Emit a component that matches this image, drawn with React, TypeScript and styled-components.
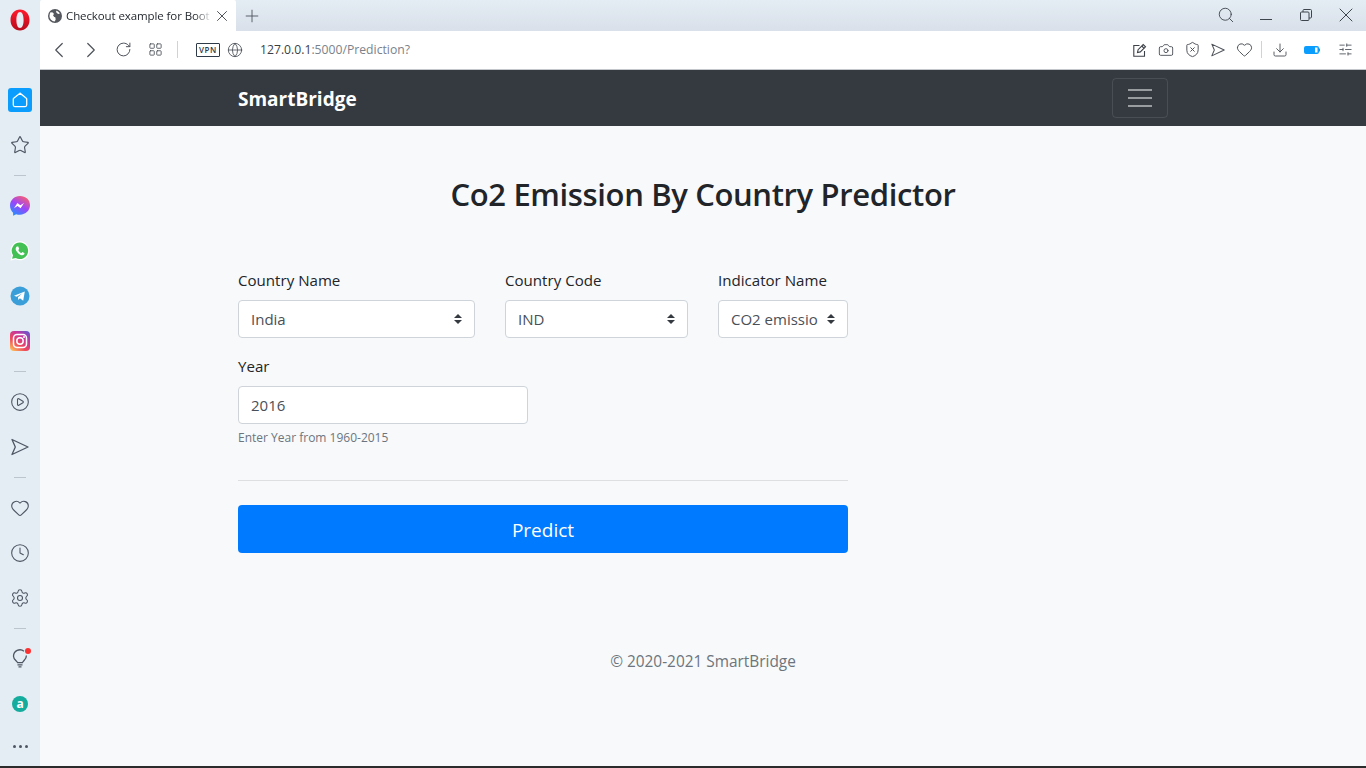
import React from "react";
import styled, { createGlobalStyle } from "styled-components";
import {
  ChevronLeft,
  ChevronRight,
  Clock,
  Download,
  Globe,
  Heart,
  LayoutGrid,
  Plus,
  RotateCw,
  Search,
  Settings,
  SlidersHorizontal,
  Star,
  X,
  Camera,
  ShieldX,
  CirclePlay,
} from "lucide-react";

const GlobalStyle = createGlobalStyle`
  html, body {
    margin: 0;
    padding: 0;
    height: 100%;
    overflow: hidden;
    background: #e4ecf4;
  }
  * { box-sizing: border-box; }
  body {
    font-family: "Open Sans", "Noto Sans", "Liberation Sans", sans-serif;
  }
`;

const Screen = styled.div`
  display: flex;
  width: 1366px;
  height: 768px;
  border-bottom: 2px solid #2b2b2b;
`;

const SideBar = styled.aside`
  width: 40px;
  flex: none;
  display: flex;
  flex-direction: column;
  align-items: center;
  gap: 15px;
  background: #e4ecf4;
  color: #4e5663;
`;

const LogoSlot = styled.div`
  height: 40px;
  margin-bottom: 30px;
  display: flex;
  align-items: center;
  justify-content: center;
`;

const SideItem = styled.div`
  position: relative;
  width: 30px;
  height: 30px;
  flex: none;
  display: flex;
  align-items: center;
  justify-content: center;
`;

const HomeTile = styled.div`
  width: 24px;
  height: 24px;
  border-radius: 3px;
  background: #0a9dfd;
  color: #fff;
  display: flex;
  align-items: center;
  justify-content: center;
`;

const SideRule = styled.div`
  width: 12px;
  height: 1px;
  flex: none;
  background: #bcc4ce;
`;

const Dot = styled.span`
  position: absolute;
  top: 4px;
  right: 4px;
  width: 6px;
  height: 6px;
  border-radius: 50%;
  background: #fb3131;
`;

const Dots = styled.div`
  display: flex;
  gap: 3px;
  margin-top: 11px;
  span {
    width: 3px;
    height: 3px;
    border-radius: 50%;
    background: #4e5663;
  }
`;

const Main = styled.div`
  flex: 1;
  min-width: 0;
  display: flex;
  flex-direction: column;
`;

const TabStrip = styled.div`
  height: 31px;
  flex: none;
  display: flex;
  align-items: stretch;
  background: linear-gradient(#e4ecf4, #d9e0e9);
  color: #4a4f57;
`;

const Tab = styled.div`
  position: relative;
  width: 196px;
  display: flex;
  align-items: center;
  padding-left: 8px;
  background: #fff;
  border-radius: 2px 2px 0 0;
`;

const TabTitle = styled.span`
  width: 146px;
  margin-left: 4px;
  font-size: 11.5px;
  letter-spacing: -0.1px;
  color: #24292f;
  white-space: nowrap;
  -webkit-mask-image: linear-gradient(90deg, #000 88%, transparent);
  mask-image: linear-gradient(90deg, #000 88%, transparent);
`;

const TabClose = styled.span`
  margin-left: 1px;
  display: flex;
  color: #3c4148;
`;

const NewTab = styled.span`
  margin-left: 6px;
  display: flex;
  align-items: center;
  color: #50565e;
`;

const WindowButtons = styled.div`
  margin-left: auto;
  display: flex;
  align-items: center;
  padding-bottom: 1px;
  color: #3f454d;
`;

const WindowButton = styled.span`
  width: 40px;
  display: flex;
  justify-content: center;
`;

const ToolBar = styled.div`
  height: 39px;
  flex: none;
  display: flex;
  align-items: center;
  padding: 0 7px 1px 3px;
  background: #fff;
  border-bottom: 1px solid #c3c7cb;
  color: #4d5259;
`;

const ToolButton = styled.span<{ $w: number }>`
  width: ${(p) => p.$w}px;
  flex: none;
  display: flex;
  justify-content: center;
`;

const ToolRule = styled.span<{ $left: number; $right: number }>`
  width: 1px;
  height: 17px;
  margin: 0 ${(p) => p.$right}px 0 ${(p) => p.$left}px;
  background: #cfd3d7;
`;

const VpnBadge = styled.span`
  width: 24px;
  height: 14px;
  margin-right: 7px;
  border: 1px solid #2f3a48;
  border-radius: 1px;
  font-size: 8px;
  font-weight: 600;
  letter-spacing: 0.6px;
  line-height: 12px;
  text-align: center;
  color: #2f3a48;
`;

const Address = styled.span`
  margin-left: 17px;
  font-size: 12.2px;
  color: #7a828c;
`;

const Host = styled.span`
  color: #3a3f46;
`;

const ToolEnd = styled.div`
  margin-left: auto;
  display: flex;
  align-items: center;
`;

const Page = styled.div`
  flex: 1;
  display: flex;
  flex-direction: column;
  background: #f8f9fa;
  color: #212529;
`;

const NavBar = styled.nav`
  height: 56px;
  flex: none;
  display: flex;
  align-items: center;
  justify-content: space-between;
  padding: 0 198px;
  background: #343a40;
`;

const Brand = styled.a`
  padding-top: 1px;
  font-size: 19px;
  font-weight: 700;
  color: #fff;
`;

const Toggler = styled.button`
  width: 56px;
  height: 40px;
  padding: 0;
  display: flex;
  flex-direction: column;
  align-items: center;
  justify-content: center;
  gap: 6px;
  border: 1px solid rgba(255, 255, 255, 0.1);
  border-radius: 4px;
  background: transparent;
  span {
    width: 24px;
    height: 2px;
    background: rgba(255, 255, 255, 0.5);
  }
`;

const Content = styled.main`
  padding: 46px 198px 0;
`;

const Title = styled.h2`
  margin: 0 0 52px;
  font-size: 31px;
  font-weight: 600;
  letter-spacing: -0.36px;
  line-height: 44px;
  text-align: center;
`;

const Form = styled.form`
  width: 610px;
`;

const FieldRow = styled.div`
  display: grid;
  grid-template-columns: 237px 183px 130px;
  column-gap: 30px;
  margin-bottom: 16px;
`;

const Field = styled.div<{ $width?: number }>`
  width: ${(p) => (p.$width ? `${p.$width}px` : "auto")};
  min-width: 0;
`;

const Label = styled.label`
  display: block;
  height: 24px;
  margin-bottom: 8px;
  font-size: 15.1px;
  line-height: 24px;
`;

const SelectWrap = styled.div`
  position: relative;
  svg {
    position: absolute;
    top: 14px;
    right: 13px;
  }
`;

const Select = styled.select`
  display: block;
  width: 100%;
  height: 38px;
  padding: 0 24px 0 12px;
  border: 1px solid #ced4da;
  border-radius: 4px;
  background: #fff;
  appearance: none;
  font: inherit;
  font-size: 15px;
  color: #495057;
`;

const Input = styled.input`
  display: block;
  width: 100%;
  height: 38px;
  padding: 0 12px;
  border: 1px solid #ced4da;
  border-radius: 4px;
  background: #fff;
  font: inherit;
  font-size: 15px;
  color: #495057;
`;

const Hint = styled.small`
  display: block;
  margin-top: 5px;
  font-size: 12px;
  line-height: 18px;
  color: #6c757d;
`;

const Rule = styled.hr`
  margin: 33px 0 24px;
  border: 0;
  border-top: 1px solid rgba(0, 0, 0, 0.1);
`;

const PredictButton = styled.button`
  display: block;
  width: 100%;
  height: 48px;
  padding: 2px 0 0;
  border: 0;
  border-radius: 4px;
  background: #007bff;
  font: inherit;
  font-size: 19px;
  color: #fff;
`;

const Footer = styled.p`
  margin: 97px 0 0;
  font-size: 15.4px;
  line-height: 24px;
  text-align: center;
  color: #6c757d;
`;

const OperaLogo = () => (
  <svg width="20" height="22" viewBox="0 0 20 22">
    <defs>
      <linearGradient id="opera" x1="0" y1="0" x2="0" y2="1">
        <stop offset="0" stopColor="#ff1b2d" />
        <stop offset="1" stopColor="#b80a1c" />
      </linearGradient>
    </defs>
    <path
      fillRule="evenodd"
      fill="url(#opera)"
      d="M10 0.500C4.600 0.500 .5 5.100 .5 11s4.100 10.500 9.500 10.500 9.500-4.600 9.500-10.500S15.400 .5 10 .5zm0 2.500c2.300 0 3.600 3.500 3.600 8s-1.300 8-3.600 8-3.600-3.500-3.600-8S7.700 3 10 3z"
    />
  </svg>
);

const HomeOutline = () => (
  <svg width="16" height="16" viewBox="0 0 16 16" fill="none" stroke="currentColor" strokeWidth="1.3">
    <path d="M8 1.200L1.700 6.300c-.3.200-.4.500-.4.800v6c0 .9.600 1.500 1.500 1.500h10.400c.9 0 1.500-.6 1.500-1.500v-6c0-.3-.1-.6-.4-.8z" />
  </svg>
);

const Plane = ({ size }: { size: number }) => (
  <svg width={size} height={size} viewBox="0 0 18 18" fill="none" stroke="currentColor" strokeWidth="1.300" strokeLinejoin="round">
    <path d="M1 1.500L17 9 1 16.500 4.300 9z" />
  </svg>
);

const PenBox = () => (
  <svg width="14" height="14" viewBox="0 0 14 14" fill="none" stroke="#3c4148" strokeWidth="1.100">
    <path d="M6.500 2.500H.8v10.700h10.700V8" />
    <path d="M4.500 9.500l.6-2.800L10.200 1.500l2.300 2.300-5.200 5.100z" />
    <path d="M8.800 3l2.300 2.300" />
  </svg>
);

const MinimizeLine = () => (
  <svg width="12" height="12" viewBox="0 0 12 12">
    <path d="M0 10.500h12" stroke="currentColor" strokeWidth="1" />
  </svg>
);

const RestoreBoxes = () => (
  <svg width="12" height="12" viewBox="0 0 12 12" fill="none" stroke="currentColor" strokeWidth="1">
    <rect x=".5" y="3" width="8.500" height="8.500" rx="1" />
    <path d="M3 3V1.500c0-.6.400-1 1-1h6.500c.6 0 1 .4 1 1V8c0 .6-.4 1-1 1H9" />
  </svg>
);

const BatteryBar = () => (
  <svg width="16" height="8" viewBox="0 0 16 8">
    <rect width="15" height="8" rx="2" fill="#0a9dfd" />
    <rect x="11" y="1.500" width="2.500" height="5" fill="#fff" />
    <rect x="15" y="2.500" width="1" height="3" fill="#0a9dfd" />
  </svg>
);

const Bulb = () => (
  <svg width="16" height="20" viewBox="0 0 16 20" fill="none" stroke="currentColor" strokeWidth="1.300">
    <path d="M5.300 13.500c0-1.500-3.800-2.800-3.800-6.300a6.500 6.500 0 0 1 10.500-5" />
    <path d="M14.400 6.500c.3 3.800-3.700 5.300-3.700 7" />
    <path d="M5 13.700h6M5.500 15.800h5M6.500 17.900h3" />
  </svg>
);

const Messenger = () => (
  <svg width="20" height="20" viewBox="0 0 20 20">
    <defs>
      <linearGradient id="msg" x1="0.2" y1="1" x2="0.8" y2="0">
        <stop offset="0" stopColor="#1f93ff" />
        <stop offset="0.5" stopColor="#9a45fb" />
        <stop offset="1" stopColor="#ff6068" />
      </linearGradient>
    </defs>
    <path
      fill="url(#msg)"
      d="M10 0C4.400 0 0 4.100 0 9.600c0 2.900 1.200 5.400 3.100 7.100v3.100l3-1.600c1.200.4 2.500.5 3.900.5 5.600 0 10-4.100 10-9.600S15.600 0 10 0z"
    />
    <path fill="#fff" d="M4 12.300l3.400-5.300 3 2.300 3.600-2.300-3.400 5.300-3-2.300z" />
  </svg>
);

const WhatsApp = () => (
  <svg width="20" height="20" viewBox="0 0 20 20">
    <path
      fill="#fff"
      d="M10 .3A9.500 9.500 0 0 0 1.800 14.600L.4 19.700l5.300-1.400A9.500 9.500 0 1 0 10 .3z"
    />
    <path
      fill="#43c155"
      d="M10 1.600a8.200 8.200 0 0 0-7 12.600l-.9 3.600 3.700-.9A8.200 8.200 0 1 0 10 1.600z"
    />
    <path
      fill="#fff"
      d="M7.300 5.500c-.3 0-.6.100-.9.400-.9 1-1 2.400-.2 3.900 1 1.900 2.500 3.300 4.500 4.200 1.300.5 2.500.4 3.300-.4.400-.4.500-.9.500-1.400l-2-1.100-1 1c-1.300-.4-2.700-1.800-3.200-3.200l.9-1-.9-2.300z"
    />
  </svg>
);

const Telegram = () => (
  <svg width="20" height="20" viewBox="0 0 20 20">
    <circle cx="10" cy="10" r="9.500" fill="#3a9fd8" />
    <path fill="#fff" d="M4 9.800l10.800-4.300-1.600 9.200-3.300-2.400-1.500 1.600-.5-2.700 4.500-4-5.700 3.500z" />
  </svg>
);

const Instagram = () => (
  <svg width="20" height="20" viewBox="0 0 20 20">
    <defs>
      <linearGradient id="ig" x1="0.1" y1="1" x2="0.9" y2="0">
        <stop offset="0" stopColor="#fdc35a" />
        <stop offset="0.35" stopColor="#ef4a5c" />
        <stop offset="0.7" stopColor="#c4379f" />
        <stop offset="1" stopColor="#5f5bd0" />
      </linearGradient>
    </defs>
    <rect width="20" height="20" rx="4" fill="url(#ig)" />
    <rect x="3.500" y="3.500" width="13" height="13" rx="3.500" fill="none" stroke="#fff" strokeWidth="1.500" />
    <circle cx="10" cy="10" r="3.200" fill="none" stroke="#fff" strokeWidth="1.500" />
    <circle cx="14" cy="6" r="1" fill="#fff" />
  </svg>
);

const AliExtension = () => (
  <svg width="16" height="16" viewBox="0 0 16 16">
    <circle cx="8" cy="8" r="8" fill="#14ac9c" />
    <text x="8" y="12" textAnchor="middle" fontSize="12" fontWeight="700" fill="#fff" fontFamily="Open Sans">
      a
    </text>
  </svg>
);

const TabGlobe = () => (
  <svg width="14" height="14" viewBox="0 0 14 14">
    <path
      fill="#55595f"
      d="M7 0a7 7 0 1 0 0 14A7 7 0 0 0 7 0zM2.500 3.200l2.300 0.300 1.200 1.500-1 1.300 1.200 1.700 1.100 0.300 0.400 2.200-1 2.100C3.800 12.100 1.500 9.800 1.500 7c0-1.400.4-2.800 1-3.800zM8 1.700c1.700.3 3.100 1.300 3.900 2.700L10.200 5 8.500 3.800z"
    />
  </svg>
);

const Carets = () => (
  <svg width="8" height="10" viewBox="0 0 8 10">
    <path fill="#343a40" d="M4 0L0 4h8zM4 10L0 6h8z" />
  </svg>
);

const App: React.FC = () => {
  return (
    <>
      <GlobalStyle />
      <Screen>
        <SideBar>
          <LogoSlot>
            <OperaLogo />
          </LogoSlot>
          <SideItem>
            <HomeTile>
              <HomeOutline />
            </HomeTile>
          </SideItem>
          <SideItem>
            <Star size={20} strokeWidth={1.4} />
          </SideItem>
          <SideRule />
          <SideItem>
            <Messenger />
          </SideItem>
          <SideItem>
            <WhatsApp />
          </SideItem>
          <SideItem>
            <Telegram />
          </SideItem>
          <SideItem>
            <Instagram />
          </SideItem>
          <SideRule />
          <SideItem>
            <CirclePlay size={20} strokeWidth={1.3} />
          </SideItem>
          <SideItem>
            <Plane size={18} />
          </SideItem>
          <SideRule />
          <SideItem>
            <Heart size={20} strokeWidth={1.3} />
          </SideItem>
          <SideItem>
            <Clock size={20} strokeWidth={1.3} />
          </SideItem>
          <SideItem>
            <Settings size={20} strokeWidth={1.3} />
          </SideItem>
          <SideRule />
          <SideItem>
            <Bulb />
            <Dot />
          </SideItem>
          <SideItem>
            <AliExtension />
          </SideItem>
          <Dots>
            <span />
            <span />
            <span />
          </Dots>
        </SideBar>
        <Main>
          <TabStrip>
            <Tab>
              <TabGlobe />
              <TabTitle>Checkout example for Boot</TabTitle>
              <TabClose>
                <X size={18} strokeWidth={1.2} />
              </TabClose>
            </Tab>
            <NewTab>
              <Plus size={20} strokeWidth={1.1} />
            </NewTab>
            <WindowButtons>
              <WindowButton>
                <Search size={18} strokeWidth={1.2} />
              </WindowButton>
              <WindowButton>
                <MinimizeLine />
              </WindowButton>
              <WindowButton>
                <RestoreBoxes />
              </WindowButton>
              <WindowButton>
                <X size={24} strokeWidth={1} />
              </WindowButton>
            </WindowButtons>
          </TabStrip>
          <ToolBar>
            <ToolButton $w={32}>
              <ChevronLeft size={26} strokeWidth={1.1} />
            </ToolButton>
            <ToolButton $w={32}>
              <ChevronRight size={26} strokeWidth={1.1} />
            </ToolButton>
            <ToolButton $w={32}>
              <RotateCw size={17} strokeWidth={1.4} />
            </ToolButton>
            <ToolButton $w={32}>
              <LayoutGrid size={15} strokeWidth={1.4} />
            </ToolButton>
            <ToolRule $left={6} $right={18} />
            <VpnBadge>VPN</VpnBadge>
            <Globe size={16} strokeWidth={1.3} />
            <Address>
              <Host>127.0.0.1</Host>:5000/Prediction?
            </Address>
            <ToolEnd>
              <ToolButton $w={26}>
                <PenBox />
              </ToolButton>
              <ToolButton $w={26}>
                <Camera size={16} strokeWidth={1.4} />
              </ToolButton>
              <ToolButton $w={26}>
                <ShieldX size={17} strokeWidth={1.4} />
              </ToolButton>
              <ToolButton $w={26}>
                <Plane size={14} />
              </ToolButton>
              <ToolButton $w={26}>
                <Heart size={17} strokeWidth={1.4} />
              </ToolButton>
              <ToolRule $left={4} $right={5} />
              <ToolButton $w={26}>
                <Download size={16} strokeWidth={1.4} />
              </ToolButton>
              <ToolButton $w={38}>
                <BatteryBar />
              </ToolButton>
              <ToolButton $w={28}>
                <SlidersHorizontal size={15} strokeWidth={1.4} />
              </ToolButton>
            </ToolEnd>
          </ToolBar>
          <Page>
            <NavBar>
              <Brand>SmartBridge</Brand>
              <Toggler aria-label="Toggle navigation">
                <span />
                <span />
                <span />
              </Toggler>
            </NavBar>
            <Content>
              <Title>Co2 Emission By Country Predictor</Title>
              <Form>
                <FieldRow>
                  <Field>
                    <Label>Country Name</Label>
                    <SelectWrap>
                      <Select defaultValue="India">
                        <option>India</option>
                      </Select>
                      <Carets />
                    </SelectWrap>
                  </Field>
                  <Field>
                    <Label>Country Code</Label>
                    <SelectWrap>
                      <Select defaultValue="IND">
                        <option>IND</option>
                      </Select>
                      <Carets />
                    </SelectWrap>
                  </Field>
                  <Field>
                    <Label>Indicator Name</Label>
                    <SelectWrap>
                      <Select defaultValue="CO2 emissio">
                        <option>CO2 emissio</option>
                      </Select>
                      <Carets />
                    </SelectWrap>
                  </Field>
                </FieldRow>
                <Field $width={290}>
                  <Label>Year</Label>
                  <Input defaultValue="2016" />
                  <Hint>Enter Year from 1960-2015</Hint>
                </Field>
                <Rule />
                <PredictButton type="button">Predict</PredictButton>
              </Form>
              <Footer>© 2020-2021 SmartBridge</Footer>
            </Content>
          </Page>
        </Main>
      </Screen>
    </>
  );
};

export default App;
